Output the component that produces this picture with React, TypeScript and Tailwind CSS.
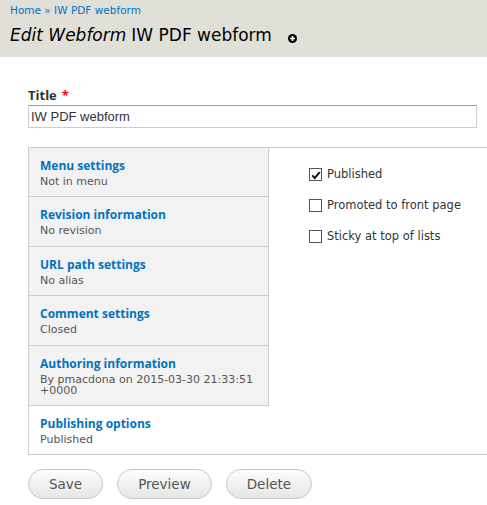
import React from 'react';

const tabs = [
    { title: 'Menu settings', summary: 'Not in menu' },
    { title: 'Revision information', summary: 'No revision' },
    { title: 'URL path settings', summary: 'No alias' },
    { title: 'Comment settings', summary: 'Closed' },
    { title: 'Authoring information', summary: 'By pmacdona on 2015-03-30 21:33:51 +0000' },
    { title: 'Publishing options', summary: 'Published', active: true },
];

const options = [
    { label: 'Published', checked: true },
    { label: 'Promoted to front page', checked: false },
    { label: 'Sticky at top of lists', checked: false },
];

const Checkbox = ({ checked }: { checked: boolean }) => (
    <span className="flex h-[13px] w-[13px] items-center justify-center border border-[#555] bg-white">
        {checked && (
            <svg viewBox="0 0 12 12" className="h-[10px] w-[10px]">
                <path d="M1.5 6.5 L4.5 9.5 L10.5 2.5" fill="none" stroke="#111" strokeWidth={2.4} />
            </svg>
        )}
    </span>
);

const App = () => {
    return (
        <div className="h-[505px] w-[487px] overflow-hidden bg-white font-['DejaVu_Sans',sans-serif] text-[#333]">
            {/* Header */}
            <div className="h-[57px] bg-[#e0e0d8] px-[10px] pt-[3px]">
                <div className="text-[10.5px] leading-[14px] text-[#0074bd]">
                    Home » IW PDF webform
                </div>
                <div className="mt-[7px] flex items-center text-[17px] leading-[22px] text-black">
                    <span className="italic">Edit Webform</span>
                    <span className="ml-[5px]">IW PDF webform</span>
                    <span className="ml-[16px] mt-[6px] flex h-[9px] w-[9px] items-center justify-center rounded-full bg-black">
                        <svg viewBox="0 0 9 9" className="h-[9px] w-[9px]">
                            <path d="M4.5 2 V7 M2 4.5 H7" stroke="white" strokeWidth={1.6} />
                        </svg>
                    </span>
                </div>
            </div>

            <div className="pl-[28px]">
                {/* Title field */}
                <div className="mt-[30px] flex items-center font-['Open_Sans',sans-serif] text-[13px] font-bold leading-[16px] text-[#333]">
                    Title
                    <span className="ml-[5px] text-[#f00]">*</span>
                </div>
                <div className="mt-[2px] flex h-[23px] w-[449px] items-center border border-[#ccc] border-t-[#999] px-[2px] font-['Liberation_Sans',sans-serif] text-[13px] text-[#333]">
                    IW PDF webform
                </div>

                {/* Vertical tabs */}
                <div className="mt-[19px] flex w-[480px] border border-[#ccc]">
                    <ul className="w-[240px] shrink-0">
                        {tabs.map((tab) => (
                            <li
                                key={tab.title}
                                className={`pl-[11px] pr-[10px] pt-[10px] pb-[9.4px] ${tab.active ? 'bg-white' : 'border-r border-b border-[#ccc] bg-[#f2f2f2]'
                                    }`}
                            >
                                <div className="font-['Open_Sans',sans-serif] text-[12px] font-bold leading-[16px] text-[#0074bd]">
                                    {tab.title}
                                </div>
                                <div className="mt-[2px] text-[11px] leading-[11px] text-[#555]">
                                    {tab.summary}
                                </div>
                            </li>
                        ))}
                    </ul>
                    <div className="flex flex-col gap-[10px] pl-[40px] pt-[16px]">
                        {options.map((opt) => (
                            <label key={opt.label} className="flex h-[21px] items-center gap-[5px] text-[11.5px] text-[#333]">
                                <Checkbox checked={opt.checked} />
                                {opt.label}
                            </label>
                        ))}
                    </div>
                </div>

                {/* Actions */}
                <div className="mt-[14px] flex gap-[14px]">
                    {['Save', 'Preview', 'Delete'].map((label) => (
                        <button
                            key={label}
                            className="h-[30px] rounded-full border border-[#c8c8c8] bg-gradient-to-b from-[#fdfdfd] to-[#e6e6e6] px-[20px] text-[13.5px] text-[#555]"
                        >
                            {label}
                        </button>
                    ))}
                </div>
            </div>
        </div>
    );
};

export default App;
